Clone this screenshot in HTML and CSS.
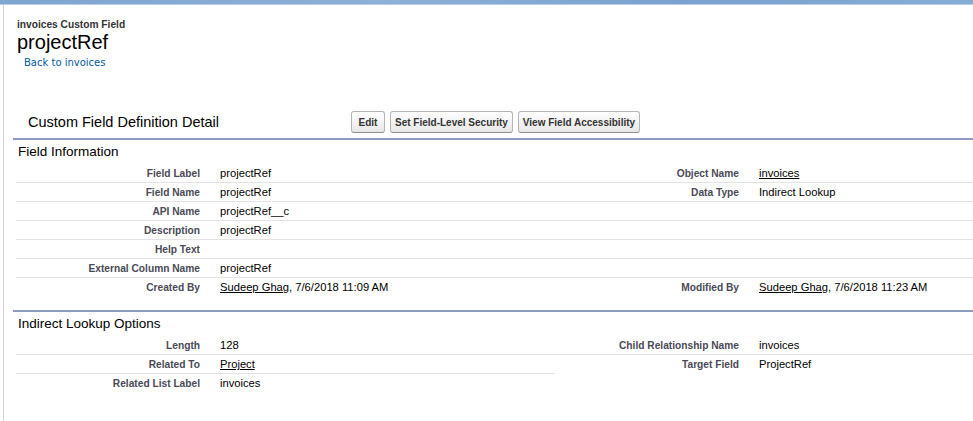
FILE: index.html
```html
<!DOCTYPE html>
<html>
<head>
<meta charset="utf-8">
<link rel="stylesheet" href="styles.css">
</head>
<body>
<div class="topbar"></div>
<div class="page">
  <div class="ptitle">
    <div class="pagetype">invoices Custom Field</div>
    <h1 class="pagedesc">projectRef</h1>
    <a class="back" href="#">Back to invoices</a>
  </div>

  <div class="block">
    <div class="pbheader">
      <h2 class="pbtitle">Custom Field Definition Detail</h2>
      <div class="pbbuttons">
        <button class="btn btn-edit">Edit</button>
        <button class="btn">Set Field-Level Security</button>
        <button class="btn">View Field Accessibility</button>
      </div>
    </div>

    <div class="section">
      <h3 class="subheader">Field Information</h3>
      <div class="rows">
        <div class="row">
          <div class="lbl">Field Label</div><div class="val">projectRef</div>
          <div class="lbl">Object Name</div><div class="val"><a class="lnk" href="#">invoices</a></div>
        </div>
        <div class="row">
          <div class="lbl">Field Name</div><div class="val">projectRef</div>
          <div class="lbl">Data Type</div><div class="val">Indirect Lookup</div>
        </div>
        <div class="row">
          <div class="lbl">API Name</div><div class="val">projectRef__c</div>
          <div class="lbl"></div><div class="val"></div>
        </div>
        <div class="row">
          <div class="lbl">Description</div><div class="val">projectRef</div>
          <div class="lbl"></div><div class="val"></div>
        </div>
        <div class="row">
          <div class="lbl">Help Text</div><div class="val"></div>
          <div class="lbl"></div><div class="val"></div>
        </div>
        <div class="row">
          <div class="lbl">External Column Name</div><div class="val">projectRef</div>
          <div class="lbl"></div><div class="val"></div>
        </div>
        <div class="row last">
          <div class="lbl">Created By</div><div class="val"><a class="lnk" href="#">Sudeep Ghag</a>, 7/6/2018 11:09 AM</div>
          <div class="lbl">Modified By</div><div class="val"><a class="lnk" href="#">Sudeep Ghag</a>, 7/6/2018 11:23 AM</div>
        </div>
      </div>
    </div>

    <div class="section">
      <h3 class="subheader">Indirect Lookup Options</h3>
      <div class="rows">
        <div class="row">
          <div class="lbl">Length</div><div class="val">128</div>
          <div class="lbl">Child Relationship Name</div><div class="val">invoices</div>
        </div>
        <div class="row right-last">
          <div class="lbl">Related To</div><div class="val"><a class="lnk" href="#">Project</a></div>
          <div class="lbl">Target Field</div><div class="val">ProjectRef</div>
        </div>
        <div class="row last">
          <div class="lbl">Related List Label</div><div class="val">invoices</div>
          <div class="lbl"></div><div class="val"></div>
        </div>
      </div>
    </div>
  </div>
</div>
</body>
</html>
```

FILE: styles.css
```css
html, body {
  margin: 0;
  padding: 0;
  background: #fff;
  overflow: hidden;
}
body {
  font-family: "Liberation Sans", Arial, sans-serif;
  color: #000;
  width: 973px;
  height: 421px;
}
.topbar {
  height: 4px;
  background: linear-gradient(90deg, #7ea4d0, #8cb0d8 40%, #7aa1cf 70%, #86acd6);
  border-bottom: 1px solid #b9cde6;
}
.page {
  margin-left: 3px;
  border-left: 1px solid #d2d2d2;
  padding-left: 9px;
  height: 416px;
  width: 960px;
  overflow: hidden;
}
.ptitle {
  padding-left: 4px;
  padding-top: 14px;
}
.pagetype {
  font-size: 10.2px;
  line-height: 12px;
  font-weight: bold;
  color: #333;
}
.pagedesc {
  margin: 0;
  font-size: 20px;
  line-height: 22px;
  font-weight: normal;
  color: #000;
}
.back {
  display: block;
  margin: 3px 0 0 7px;
  font-family: "DejaVu Sans", Verdana, sans-serif;
  font-size: 10px;
  line-height: 14px;
  color: #015ba7;
  text-decoration: none;
}
.block {
  margin-top: 38px;
  width: 1090px;
}
.pbheader {
  display: flex;
  align-items: center;
  padding: 3px 0 5px 0;
  border-bottom: 2px solid #8e9dbe;
}
.pbtitle {
  margin: 0;
  width: 323px;
  padding-left: 15px;
  font-size: 14.5px;
  font-weight: normal;
  color: #000;
  white-space: nowrap;
}
.pbbuttons {
  display: flex;
  gap: 5px;
}
.btn {
  height: 22px;
  box-sizing: border-box;
  padding: 0 4px;
  font-family: "Liberation Sans", Arial, sans-serif;
  font-size: 10px;
  font-weight: bold;
  color: #333;
  background: linear-gradient(#ffffff, #f3f3f3 50%, #e6e6e6);
  border: 1px solid #b5b5b5;
  border-bottom-color: #8f8f8f;
  border-radius: 3px;
  white-space: nowrap;
}
.btn-edit {
  min-width: 34px;
}
.section {
  margin-bottom: 14px;
}
.section + .section {
  border-top: 2px solid #8e9dbe;
}
.subheader {
  margin: 0;
  padding: 4px 0 4px 5px;
  font-size: 13.5px;
  line-height: 16px;
  font-weight: normal;
  color: #000;
}
.rows {
  margin-left: 3px;
}
.row {
  display: grid;
  grid-template-columns: 194px 345px 194px 345px;
}
.lbl, .val {
  height: 18px;
  border-bottom: 1px solid #e3e3e3;
  display: flex;
  align-items: center;
  white-space: nowrap;
}
.lbl {
  justify-content: flex-end;
  padding-right: 10px;
  font-size: 10.2px;
  font-weight: bold;
  color: #4a4a56;
}
.val {
  padding-left: 10px;
  font-size: 11.2px;
  color: #000;
}
.row.last .lbl, .row.last .val {
  border-bottom: none;
}
.row.right-last .lbl:nth-child(3), .row.right-last .val:nth-child(4) {
  border-bottom: none;
}
.lnk {
  color: #000;
  text-decoration: underline;
}
```
